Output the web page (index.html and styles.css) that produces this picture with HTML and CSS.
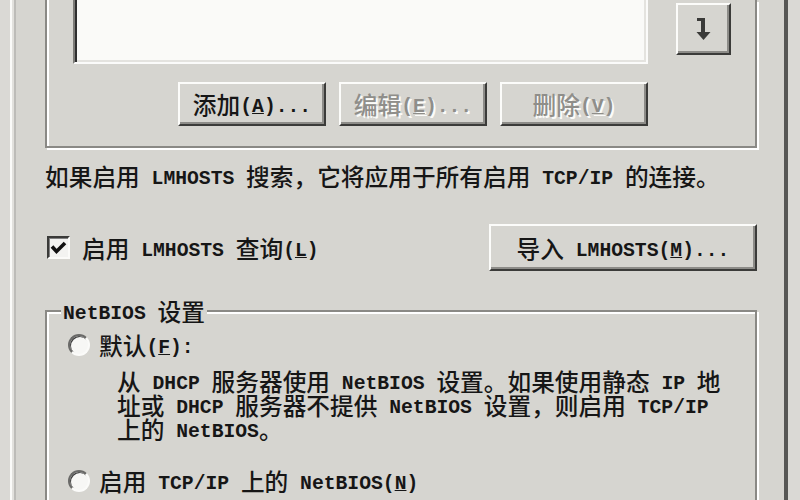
FILE: index.html
```html
<!DOCTYPE html>
<html lang="zh-CN">
<head>
    <meta charset="UTF-8">
    <title>高级 TCP/IP 设置 - WINS</title>
    <link rel="stylesheet" href="styles.css">
</head>
<body>
    <div class="tab">
        <div class="group group-top">
            <div class="list-row">
                <div class="listbox"></div>
                <button class="btn btn-arrow" title="下移">
                    <svg width="16" height="22" viewBox="0 0 16 22"><path d="M1 0h8v14h5.5l-7 8L0.5 14H5V3H1z" fill="#3a3a38"/></svg>
                </button>
            </div>
            <div class="btn-row">
                <button class="btn"><span>添加<span class="en">(<u>A</u>)...</span></span></button>
                <button class="btn" disabled><span>编辑<span class="en">(<u>E</u>)...</span></span></button>
                <button class="btn" disabled><span>删除<span class="en">(<u>V</u>)</span></span></button>
            </div>
        </div>

        <p class="note">如果启用<span class="en"> LMHOSTS </span>搜索，它将应用于所有启用<span class="en"> TCP/IP </span>的连接。</p>

        <div class="opt-row">
            <label class="check-label">
                <span class="checkbox">
                    <svg width="19" height="19" viewBox="0 0 19 19"><path d="M3 8.5l4.5 5L16 5" fill="none" stroke="#111" stroke-width="3.6"/></svg>
                </span>
                <span>启用<span class="en"> LMHOSTS </span>查询<span class="en">(<u>L</u>)</span></span>
            </label>
            <button class="btn btn-import"><span>导入<span class="en"> LMHOSTS(<u>M</u>)...</span></span></button>
        </div>

        <fieldset class="group group-netbios">
            <legend><span class="en">NetBIOS </span>设置</legend>
            <div class="netbios-body">
                <div class="radio-row">
                    <span class="radio"></span>
                    <span>默认<span class="en">(<u>F</u>):</span></span>
                </div>
                <p class="desc">从<span class="en"> DHCP </span>服务器使用<span class="en"> NetBIOS </span>设置。如果使用静态<span class="en"> IP </span>地<br>址或<span class="en"> DHCP </span>服务器不提供<span class="en"> NetBIOS </span>设置，则启用<span class="en"> TCP/IP</span><br>上的<span class="en"> NetBIOS</span>。</p>
                <div class="radio-row radio-second">
                    <span class="radio"></span>
                    <span>启用<span class="en"> TCP/IP </span>上的<span class="en"> NetBIOS(<u>N</u>)</span></span>
                </div>
            </div>
        </fieldset>
    </div>
</body>
</html>
```

FILE: styles.css
```css
* {
    box-sizing: border-box;
}

html, body {
    margin: 0;
}

body {
    width: 800px;
    height: 500px;
    overflow: hidden;
    background: #dad9d5;
    font-family: "Noto Sans CJK SC", sans-serif;
    font-size: 23.7px;
    font-weight: 500;
    line-height: 26px;
    color: #161616;
}

.en {
    font-family: "Liberation Mono", monospace;
    font-size: 19.7px;
    font-weight: bold;
    line-height: 0;
    vertical-align: 2px;
}

.tab {
    margin-left: 10px;
    width: 778px;
    height: 500px;
    background: #d6d5d0;
    border-left: 2px solid #fbfbf9;
    border-right: 4px solid #575755;
    box-shadow: inset 2px 0 0 #e2e1dd, inset 4px 0 0 #bdbcb8;
}

.group {
    margin-left: 33px;
    width: 712px;
    border: 2px solid #8a8985;
    box-shadow: inset 2px 2px 0 #fff, 2px 2px 0 #fff;
}

.group-top {
    border-top: 0;
    box-shadow: inset 2px 0 0 #fff, 2px 2px 0 #fff;
    padding: 0 0 20px 26px;
}

.list-row {
    display: flex;
    align-items: flex-start;
}

.listbox {
    width: 575px;
    height: 64px;
    background: #fafaf8;
    border-left: 2px solid #7d7c78;
    border-right: 2px solid #fbfbfa;
    border-bottom: 2px solid #fbfbfa;
    box-shadow: inset 2px 0 0 #2f2f2f, inset -2px -2px 0 #e4e3df;
}

.btn {
    font: inherit;
    color: inherit;
    background: #d6d5d0;
    border: 2px solid;
    border-color: #fcfcfa #3b3b39 #3b3b39 #fcfcfa;
    box-shadow: inset -2px -2px 0 #8d8c88;
    margin: 0;
    padding: 0;
    display: flex;
    align-items: center;
    justify-content: center;
}

.btn:disabled {
    color: #8f8e8a;
    text-shadow: 2px 2px 0 #fbfbf9;
}

.btn-arrow {
    width: 55px;
    height: 52px;
    margin: 3px 0 0 28px;
}

.btn-row {
    display: flex;
    gap: 13px;
    margin: 18px 0 0 105px;
}

.btn-row .btn {
    width: 148px;
    height: 44px;
}

.note {
    margin: 15px 0 0 33px;
}

.opt-row {
    display: flex;
    align-items: center;
    justify-content: space-between;
    width: 712px;
    height: 47px;
    margin: 35px 0 0 33px;
}

.check-label {
    display: flex;
    align-items: center;
    margin-left: 2px;
}

.checkbox {
    width: 23px;
    height: 23px;
    margin-right: 12px;
    background: #f3f3f1;
    border: 2px solid;
    border-color: #3a3a38 #fbfbf9 #fbfbf9 #3a3a38;
    box-shadow: inset 1px 1px 0 #808080;
    display: flex;
    align-items: center;
    justify-content: center;
}

.btn-import {
    width: 268px;
    height: 47px;
}

.group-netbios {
    margin: 27px 0 0 33px;
    padding: 0;
    min-width: 0;
    height: 260px;
}

legend {
    margin-left: 14px;
    padding: 0 2px;
    background: #d6d5d0;
    line-height: 26px;
}

.netbios-body {
    padding: 8px 0 0 21px;
}

.radio-row {
    display: flex;
    align-items: center;
    height: 26px;
}

.radio {
    width: 22px;
    height: 22px;
    margin-right: 9px;
    border-radius: 50%;
    background: #f7f7f5;
    border: 2px solid;
    border-color: #6a6a68 #fbfbf9 #fbfbf9 #6a6a68;
    box-shadow: inset 1px 1px 0 #404040;
}

.desc {
    margin: 11px 0 0 49px;
    line-height: 24px;
}

.radio-second {
    margin-top: 27px;
}
```
